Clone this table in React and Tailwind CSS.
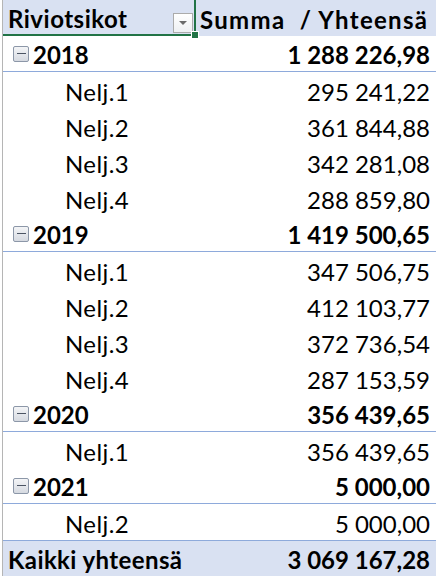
import React from 'react';

const rows = [
  { label: '2018', value: '1 288 226,98', year: true },
  { label: 'Nelj.1', value: '295 241,22' },
  { label: 'Nelj.2', value: '361 844,88' },
  { label: 'Nelj.3', value: '342 281,08' },
  { label: 'Nelj.4', value: '288 859,80' },
  { label: '2019', value: '1 419 500,65', year: true },
  { label: 'Nelj.1', value: '347 506,75' },
  { label: 'Nelj.2', value: '412 103,77' },
  { label: 'Nelj.3', value: '372 736,54' },
  { label: 'Nelj.4', value: '287 153,59' },
  { label: '2020', value: '356 439,65', year: true },
  { label: 'Nelj.1', value: '356 439,65' },
  { label: '2021', value: '5 000,00', year: true },
  { label: 'Nelj.2', value: '5 000,00' },
];

function MinusBox() {
  return (
    <span className="flex h-4 w-4 items-center justify-center rounded-[2px] border border-[#8c97a8] bg-gradient-to-b from-[#f4f5f7] to-[#d6dae1]">
      <span className="h-px w-[9px] bg-[#4b5463]" />
    </span>
  );
}

function Row({ label, value, year }) {
  return (
    <div className={`flex h-9 items-center ${year ? 'border-b border-[#8eaadb] font-bold' : ''}`}>
      <div className="flex w-[193px] items-center">
        {year ? (
          <div className="flex items-center gap-[4px] pl-[10px]">
            <MinusBox />
            <span className="pt-[3px]">{label}</span>
          </div>
        ) : (
          <span className="pl-[62px] pt-[3px] tracking-[0.4px]">{label}</span>
        )}
      </div>
      <div className="flex-1 pr-[6px] pt-[3px] text-right">{value}</div>
    </div>
  );
}

export default function App() {
  return (
    <div className="h-[577px] w-[436px] bg-white text-[24px] leading-none text-black" style={{ fontFamily: 'Lato, "Noto Sans", sans-serif' }}>
      <div className="ml-[2px] border-l border-[#b5b5b5]">
        <div className="flex h-9 bg-[#d9e1f2] font-bold">
          <div className="relative flex w-[193px] items-center justify-between border-b-2 border-r-2 border-[#217346] pl-[5px] pr-[1px]">
            <span className="pt-[4px] tracking-[0.5px]">Riviotsikot</span>
            <span className="mt-[12px] flex h-5 w-5 items-center justify-center border border-[#ababab] bg-gradient-to-b from-white to-[#eef0f3]">
              <span className="h-0 w-0 border-x-[4px] border-t-[4px] border-x-transparent border-t-[#6b6b6b]" />
            </span>
            <span className="absolute -bottom-[4px] -right-[4px] h-[6px] w-[6px] bg-[#217346] ring-1 ring-white" />
          </div>
          <div className="flex flex-1 items-center whitespace-nowrap pl-[4px] pt-[4px] tracking-[1.3px]">Summa&nbsp; / Yhteensä</div>
        </div>
        {rows.map((r, i) => (
          <Row key={i} {...r} />
        ))}
        <div className="flex h-9 items-center border-t border-[#8eaadb] bg-[#d9e1f2] pt-[3px] font-bold">
          <span className="pl-[5px] tracking-[0.4px]">Kaikki yhteensä</span>
          <span className="flex-1 pr-[6px] text-right">3 069 167,28</span>
        </div>
      </div>
    </div>
  );
}
